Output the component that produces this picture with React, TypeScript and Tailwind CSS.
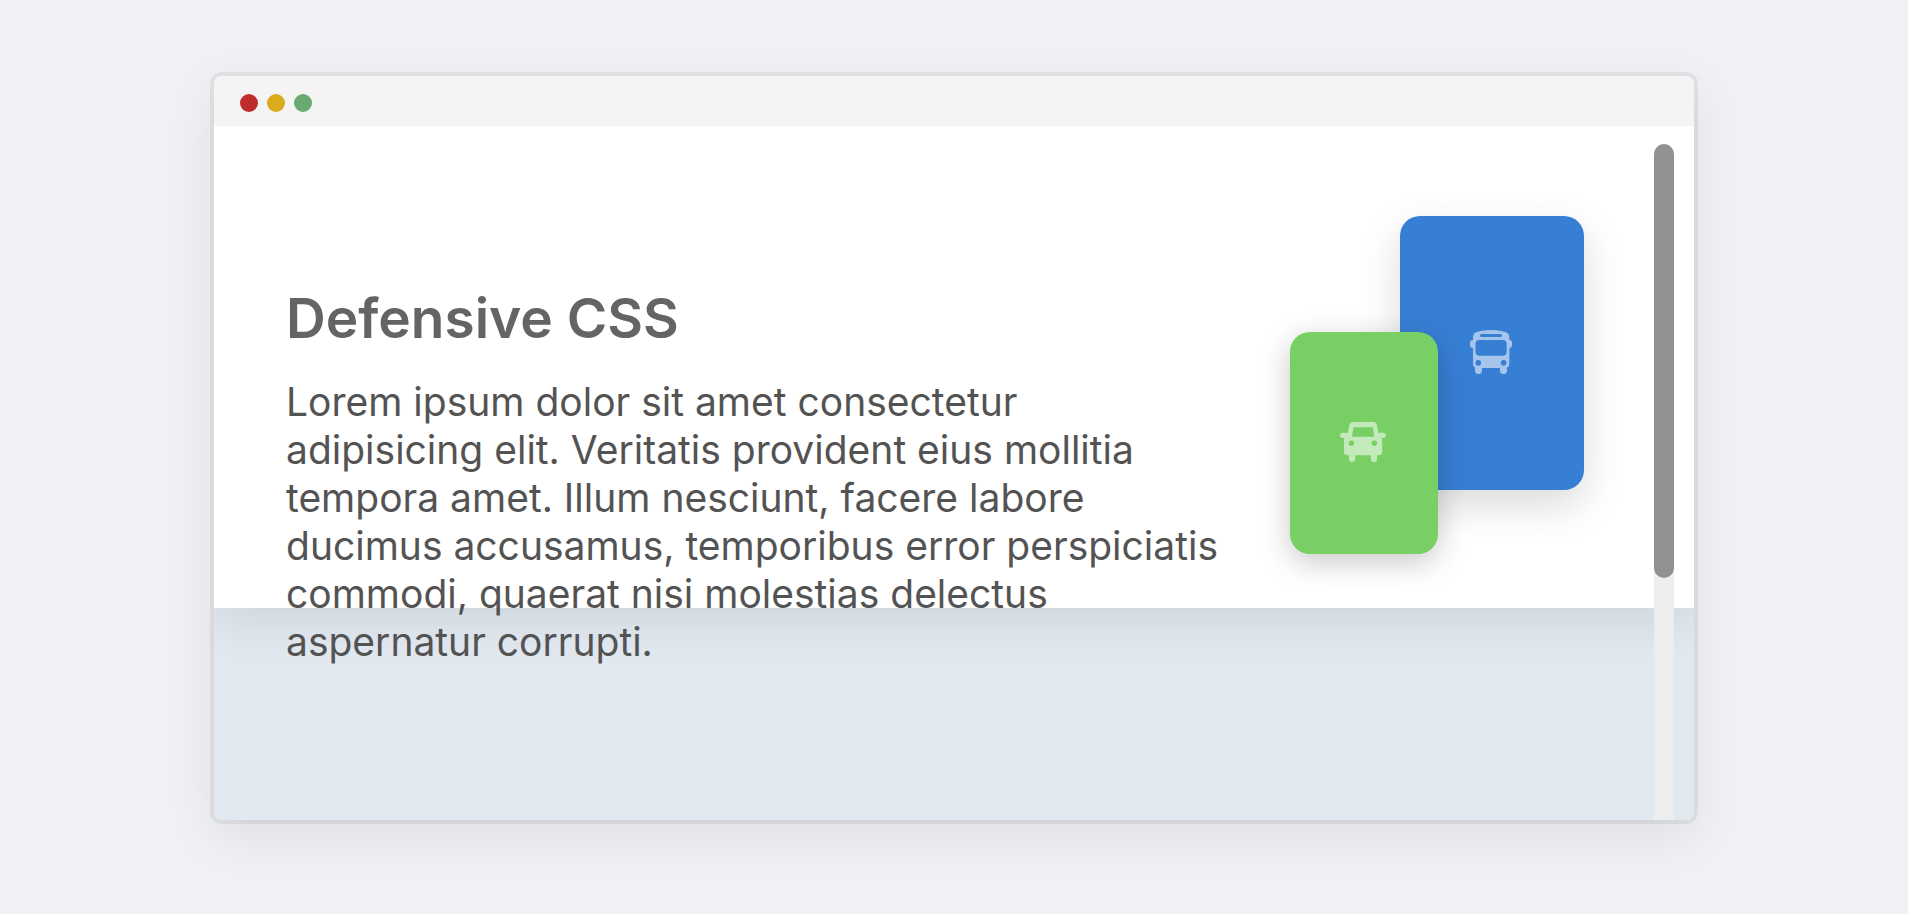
function BusIcon() {
  return (
    <svg viewBox="0 0 42 44" className="h-11 w-[42px] fill-[#a6c5ec]" aria-hidden="true">
      <path
        fillRule="evenodd"
        d="M3 8 Q3 4 5.500 2.600 Q11 0 21 0 Q31 0 36.500 2.600 Q39.300 4 39.300 8 V10 Q42 10 42 13 V15 Q42 18 39.300 18 V34 Q39.300 37 37 37.700 V40.500 Q37 44 33.500 44 Q30 44 30 40.500 V38 H12 V40.500 Q12 44 8.500 44 Q5 44 5 40.500 V37.700 Q3 37 3 34 V18 Q0 18 0 15 V13 Q0 10 3 10 Z
        M11.500 4 Q10 4 10 5.500 Q10 7 11.500 7 H30.500 Q32 7 32 5.500 Q32 4 30.500 4 Z
        M9.500 10 Q5.500 10 5.500 14 V21.700 Q5.500 25.700 9.500 25.700 H32.700 Q36.700 25.700 36.700 21.700 V14 Q36.700 10 32.700 10 Z
        M5.500 32.700 a2.800 2.800 0 1 0 5.600 0 a2.800 2.800 0 1 0 -5.600 0 Z
        M30.800 32.700 a2.800 2.800 0 1 0 5.600 0 a2.800 2.800 0 1 0 -5.600 0 Z"
      />
    </svg>
  );
}

function CarIcon() {
  return (
    <svg viewBox="0 0 46 40" className="h-10 w-[46px] fill-[#c3eaba]" aria-hidden="true">
      <path
        fillRule="evenodd"
        d="M9.300 3.500 Q9.900 0 13.500 0 H33 Q36.500 0 37 3.500 L38.200 10.800 H43.500 Q46 11 46 13.300 Q46 16 43.300 16 H41.500 Q42.200 17 42.200 19 V29.500 Q42.200 33.300 38.500 33.300 H37 V37 Q37 40 34 40 Q30.900 40 30.900 37 V33.300 H15.200 V37 Q15.200 40 12.100 40 Q9 40 9 37 V33.300 H7.500 Q3.900 33.300 3.900 29.500 V19 Q3.900 17 4.600 16 H2.700 Q0 16 0 13.300 Q0 11 2.500 10.800 H7.900 Z
        M13.600 5.300 L12 14.800 H34.200 L32.800 5.300 Z
        M8.700 21.300 a2.700 2.700 0 1 0 5.400 0 a2.700 2.700 0 1 0 -5.400 0 Z
        M31.700 21.300 a2.700 2.700 0 1 0 5.400 0 a2.700 2.700 0 1 0 -5.400 0 Z"
      />
    </svg>
  );
}

function TitleBar() {
  return (
    <header className="relative z-20 flex h-[50px] items-center gap-[9px] bg-[#f4f4f4] px-[26px] pt-1">
      <span className="size-[18px] rounded-full bg-[#c02c2c]" />
      <span className="size-[18px] rounded-full bg-[#daab1e]" />
      <span className="size-[18px] rounded-full bg-[#68aa6f]" />
    </header>
  );
}

function Cards() {
  return (
    <div className="grid w-[294px] shrink-0 grid-cols-[110px_38px_146px] grid-rows-[116px_158px_64px]">
      <div className="col-start-2 col-end-4 row-start-1 row-end-3 flex items-center justify-center rounded-[20px] bg-[#377fd5] pr-0.5 pb-0.5 shadow-[0_15px_40px_rgba(0,0,0,0.15)]">
        <BusIcon />
      </div>
      <div className="z-10 col-start-1 col-end-3 row-start-2 row-end-4 flex items-center justify-center rounded-[20px] bg-[#78cf64] pr-0.5 pb-0.5 shadow-[0_8px_30px_rgba(0,0,0,0.22)]">
        <CarIcon />
      </div>
    </div>
  );
}

export default function App() {
  return (
    <div className="min-h-screen bg-[#eff1f5] px-[214px] py-[76px] font-[Inter,sans-serif]">
      <div className="relative overflow-hidden rounded-lg shadow-[0_0_0_4px_rgba(0,0,0,0.06),0_15px_50px_rgba(0,0,0,0.08)]">
        <TitleBar />
        <main>
          <section className="relative z-10 flex h-[482px] items-start justify-between bg-white pr-[110px] pl-[72px] shadow-[0_15px_40px_rgba(0,0,0,0.08)]">
            <div className="w-[936px] pt-[160px]">
              <h1 className="text-[55px] leading-[64px] font-semibold text-[#646464]">Defensive CSS</h1>
              <p className="mt-7 text-[39px] leading-[48px] text-[#535353]">
                Lorem ipsum dolor sit amet consectetur adipisicing elit. Veritatis provident eius mollitia
                tempora amet. Illum nesciunt, facere labore ducimus accusamus, temporibus error perspiciatis
                commodi, quaerat nisi molestias delectus aspernatur corrupti.
              </p>
            </div>
            <div className="pt-[90px]">
              <Cards />
            </div>
          </section>
          <section className="h-[212px] bg-[#e1e8f0]" />
        </main>
        <div className="absolute top-[68px] right-5 bottom-0 z-20 w-5 rounded-t-full bg-[#ededed]">
          <div className="h-[434px] rounded-full bg-[#919191]" />
        </div>
      </div>
    </div>
  );
}
